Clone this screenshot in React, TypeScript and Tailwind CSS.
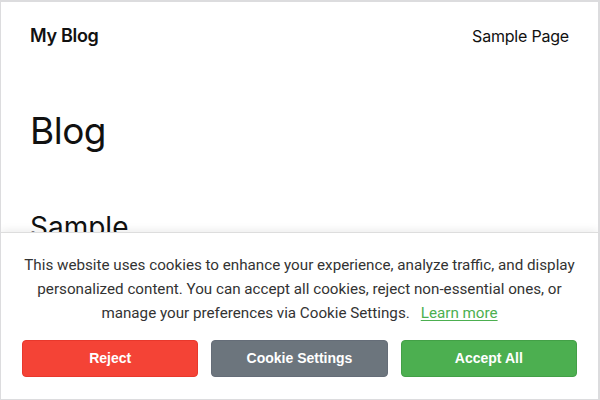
export default function App() {
  return (
    <div className="relative h-[400px] w-[600px] overflow-hidden border-t-2 border-r-2 border-b border-l border-[#dcdcde] bg-white">
      <header className="flex items-center justify-between px-[29px] pt-[20px] font-['Inter',sans-serif] text-[#111]">
        <span className="text-[18px] font-semibold tracking-[-0.3px]">My Blog</span>
        <span className="text-[16px] tracking-[-0.2px]">Sample Page</span>
      </header>

      <main className="px-[29px] font-['Inter',sans-serif] text-[#111]">
        <h1 className="mt-[63px] text-[37px] font-normal leading-none tracking-[-0.5px]">Blog</h1>
        <h2 className="mt-[64px] text-[28px] font-normal leading-none">Sample</h2>
      </main>

      {/* Cookie banner */}
      <div className="absolute inset-x-0 bottom-0 h-[167px] border-t border-[#dddddd] bg-white px-[21px] pt-[20px] shadow-[0_-2px_8px_rgba(0,0,0,0.08)]">
        <div className="text-center font-['Roboto',sans-serif] text-[15.2px] leading-[24px] text-[#333]">
          <p>
            This website uses cookies to enhance your experience, analyze traffic, and display
            personalized content. You can accept all cookies, reject non-essential ones, or
          </p>
          <p className="flex justify-center gap-[11px]">
            <span>manage your preferences via Cookie Settings.</span>
            <a href="#" className="text-[#4caf50] underline underline-offset-2">
              Learn more
            </a>
          </p>
        </div>
        <div className="mt-[15px] grid grid-cols-3 gap-[13px] font-['Liberation_Sans',Arial,sans-serif] text-[14px] font-bold text-white">
          <button className="h-[37px] rounded-[4px] border border-[#e8382c] bg-[#f44336]">Reject</button>
          <button className="h-[37px] rounded-[4px] border border-[#656d78] bg-[#6c757d]">Cookie Settings</button>
          <button className="h-[37px] rounded-[4px] border border-[#43a047] bg-[#4caf50]">Accept All</button>
        </div>
      </div>
    </div>
  );
}
